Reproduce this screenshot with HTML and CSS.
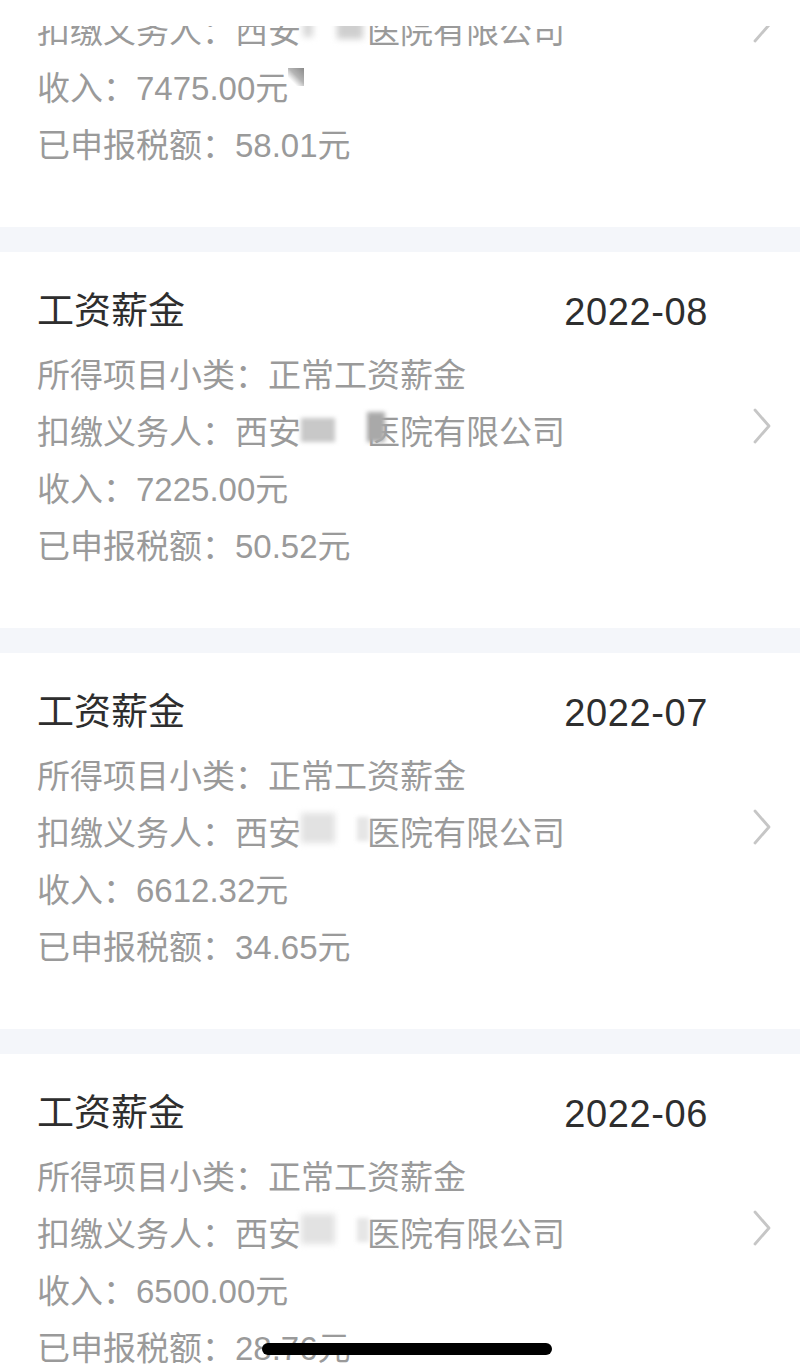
FILE: index.html
```html
<!DOCTYPE html>
<html lang="zh-CN">
<head>
<meta charset="utf-8">
<title>收入纳税明细</title>
<link rel="stylesheet" href="styles.css">
</head>
<body>
<div class="topcover"></div>
<main class="list">
  <section class="card">
    <div class="content">
      <div class="head"><span class="title">工资薪金</span><span class="date">2022-09</span></div>
      <div class="row">所得项目小类：正常工资薪金</div>
      <div class="row">扣缴义务人：西安<span class="mask mask-a"></span>医院有限公司</div>
      <div class="row">收入：7475.00元<span class="smudge"></span></div>
      <div class="row">已申报税额：58.01元</div>
    </div>
    <svg class="chev" viewBox="0 0 20 36"><path d="M3 2 L17 18 L3 34"/></svg>
  </section>
  <div class="sep"></div>
  <section class="card">
    <div class="content">
      <div class="head"><span class="title">工资薪金</span><span class="date">2022-08</span></div>
      <div class="row">所得项目小类：正常工资薪金</div>
      <div class="row">扣缴义务人：西安<span class="mask mask-b"></span>医院有限公司</div>
      <div class="row">收入：7225.00元</div>
      <div class="row">已申报税额：50.52元</div>
    </div>
    <svg class="chev" viewBox="0 0 20 36"><path d="M3 2 L17 18 L3 34"/></svg>
  </section>
  <div class="sep"></div>
  <section class="card">
    <div class="content">
      <div class="head"><span class="title">工资薪金</span><span class="date">2022-07</span></div>
      <div class="row">所得项目小类：正常工资薪金</div>
      <div class="row">扣缴义务人：西安<span class="mask mask-c"></span>医院有限公司</div>
      <div class="row">收入：6612.32元</div>
      <div class="row">已申报税额：34.65元</div>
    </div>
    <svg class="chev" viewBox="0 0 20 36"><path d="M3 2 L17 18 L3 34"/></svg>
  </section>
  <div class="sep"></div>
  <section class="card">
    <div class="content">
      <div class="head"><span class="title">工资薪金</span><span class="date">2022-06</span></div>
      <div class="row">所得项目小类：正常工资薪金</div>
      <div class="row">扣缴义务人：西安<span class="mask mask-c"></span>医院有限公司</div>
      <div class="row">收入：6500.00元</div>
      <div class="row">已申报税额：28.76元</div>
    </div>
    <svg class="chev" viewBox="0 0 20 36"><path d="M3 2 L17 18 L3 34"/></svg>
  </section>
</main>
<div class="home-bar"></div>
</body>
</html>
```
FILE: styles.css
```css
html, body {
  margin: 0;
  padding: 0;
  background: #ffffff;
  overflow: hidden;
}
body {
  font-family: "Liberation Sans", "Noto Sans CJK SC", sans-serif;
  height: 1371px;
}
.topcover {
  position: fixed;
  top: 0;
  left: 0;
  right: 0;
  height: 26px;
  background: #ffffff;
  z-index: 5;
}
.list {
  margin-top: -149px;
  display: flex;
  flex-direction: column;
}
.card {
  display: flex;
  align-items: center;
  padding: 30px 28px 53px 37px;
  background: #ffffff;
}
.content {
  flex: 1;
  min-width: 0;
}
.head {
  display: flex;
  justify-content: space-between;
  align-items: center;
  height: 60px;
  margin-bottom: 5px;
  color: #2e2e2e;
}
.title {
  font-size: 37px;
  line-height: 60px;
}
.date {
  font-size: 38px;
  line-height: 60px;
  letter-spacing: 0.6px;
}
.row {
  font-size: 33px;
  line-height: 57px;
  height: 57px;
  color: #9a9a9a;
  white-space: nowrap;
}
.chev {
  width: 20px;
  height: 36px;
  margin-left: 44px;
  margin-top: -6px;
  flex: none;
}
.chev path {
  fill: none;
  stroke: #c6c6c6;
  stroke-width: 2.8;
  stroke-linecap: round;
  stroke-linejoin: round;
}
.sep {
  height: 25px;
  background: #f4f6fa;
}
.mask {
  display: inline-block;
  width: 66px;
  height: 30px;
  vertical-align: -4px;
  position: relative;
}
.mask::before,
.mask::after {
  content: "";
  position: absolute;
}
.mask-a::before {
  left: 2px;
  top: -6px;
  width: 10px;
  height: 26px;
  background: #d8d8d8;
  filter: blur(3px);
}
.mask-a::after {
  left: 36px;
  top: -4px;
  width: 26px;
  height: 26px;
  background: #cfcfcf;
  filter: blur(3px);
}
.mask-b::before {
  left: 0;
  top: 0;
  width: 34px;
  height: 24px;
  background: #c8c8c8;
  filter: blur(2px);
}
.mask-b::after {
  left: 66px;
  top: -6px;
  width: 18px;
  height: 30px;
  background: #a9a9a9;
  filter: blur(2px);
}
.mask-c::before {
  left: 0;
  top: -6px;
  width: 34px;
  height: 30px;
  background: #e2e2e2;
  filter: blur(3px);
}
.mask-c::after {
  left: 56px;
  top: -2px;
  width: 12px;
  height: 24px;
  background: #e6e6e6;
  filter: blur(2px);
}
.smudge {
  display: inline-block;
  width: 16px;
  height: 18px;
  vertical-align: 14px;
  background: linear-gradient(225deg, #8a8a8a 0%, #b5b5b5 45%, rgba(255,255,255,0) 75%);
  filter: blur(0.6px);
}
.home-bar {
  position: fixed;
  left: 262px;
  bottom: 16px;
  width: 290px;
  height: 12px;
  border-radius: 6px;
  background: #000000;
  z-index: 6;
}
```
